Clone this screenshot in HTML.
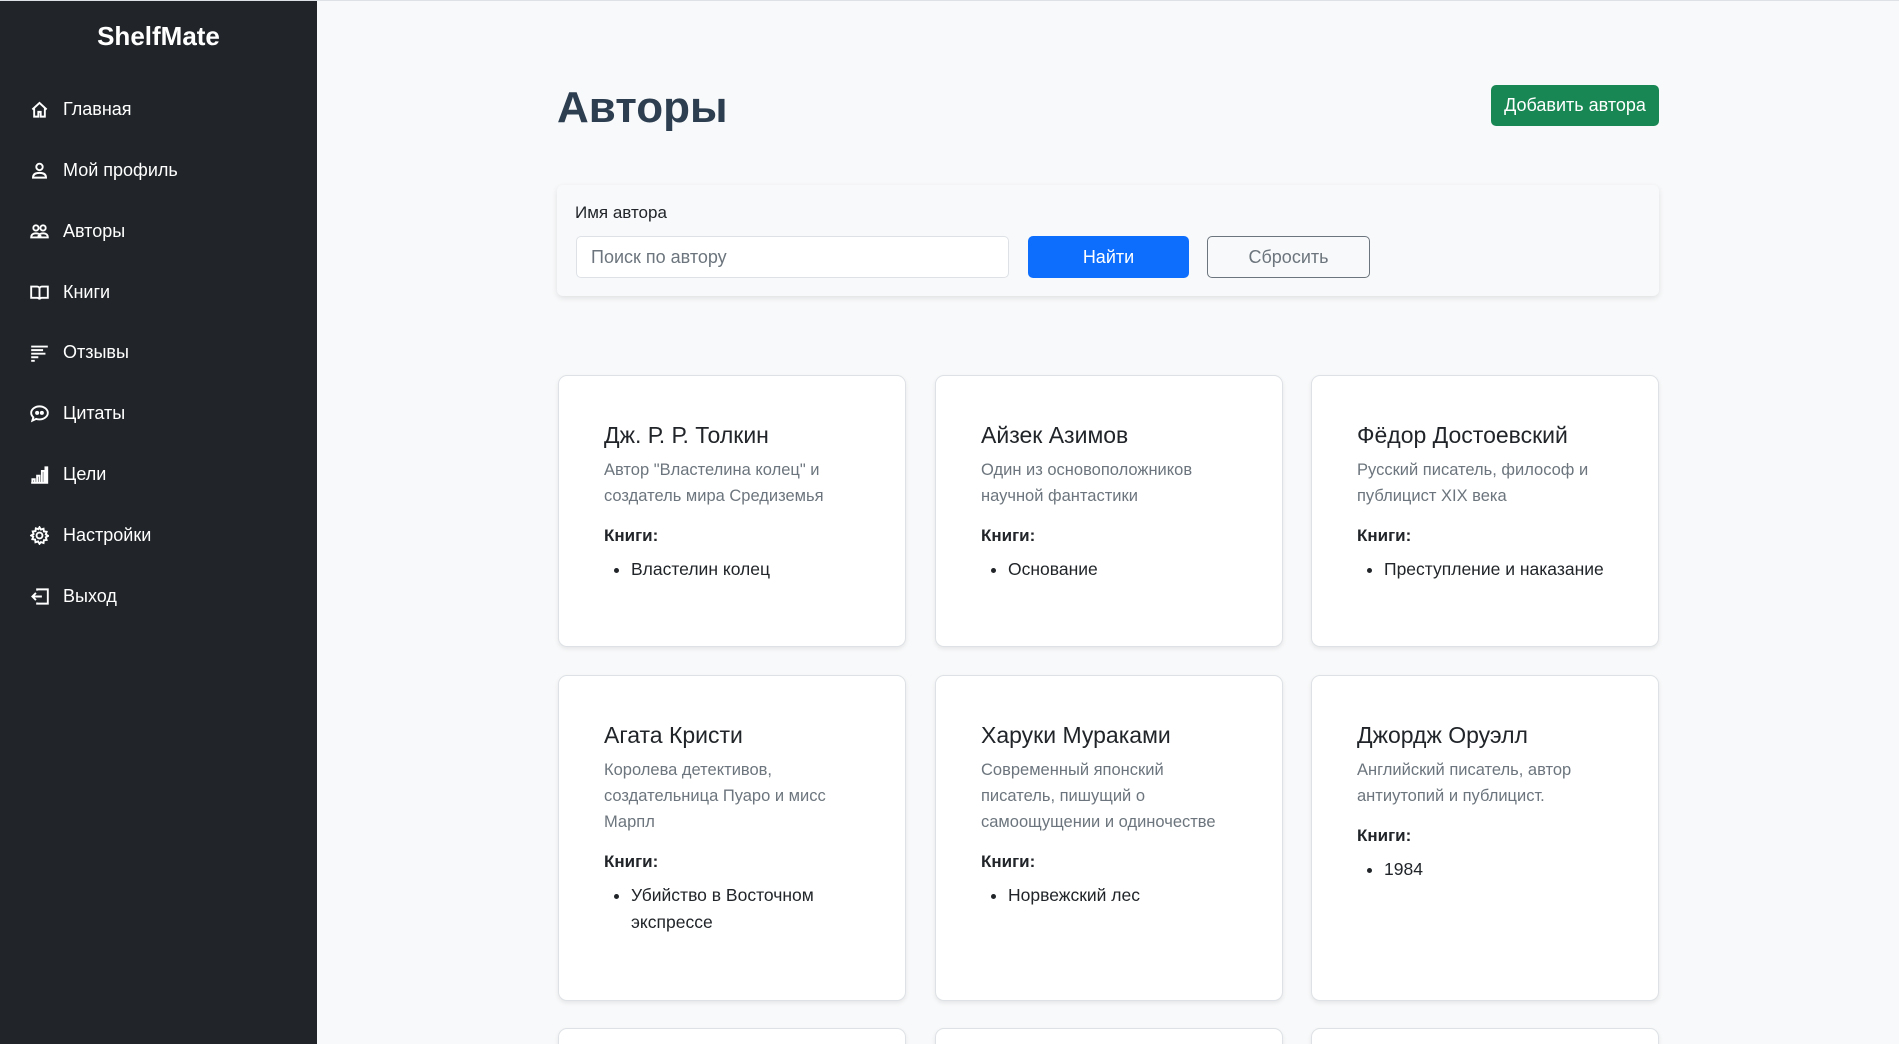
<!DOCTYPE html>
<html><head><meta charset="utf-8"><style>
*{box-sizing:border-box;margin:0;padding:0}
html,body{width:1899px;height:1044px;overflow:hidden}
body{background:#f8f9fa;font-family:"Liberation Sans","DejaVu Sans",sans-serif;position:relative}
#wrap{position:absolute;left:0;top:0;width:1899px;height:1044px;overflow:hidden;border-top:1px solid #dee2e6}
.sb{position:absolute;left:0;top:0;width:317px;height:1044px;background:#212529;color:#fff}
.logo{position:absolute;top:20px;width:317px;text-align:center;font-size:26px;font-weight:bold}
.nav{position:absolute;left:30px;display:flex;align-items:center;font-size:18px;height:24px}
.nav svg{width:19px;height:19px;margin-right:14px;stroke:#fff;fill:none;stroke-width:1.6}
h1{position:absolute;left:557px;top:82px;font-size:44px;color:#2c3e50;font-weight:bold}
.add{position:absolute;left:1491px;top:84px;width:168px;height:41px;background:#198754;color:#fff;border-radius:5px;font-size:18px;text-align:center;line-height:41px}
.search{position:absolute;left:557px;top:184px;width:1102px;height:111px;background:#f8f9fa;border-radius:6px;box-shadow:0 2px 6px rgba(0,0,0,.1)}
.lbl{position:absolute;left:18px;top:18px;font-size:17px;color:#212529}
.inp{position:absolute;left:19px;top:51px;width:433px;height:42px;background:#fff;border:1px solid #dee2e6;border-radius:5px;font-size:18px;color:#6c757d;padding-left:14px;line-height:40px}
.b1{position:absolute;left:471px;top:51px;width:161px;height:42px;background:#0d6efd;color:#fff;border-radius:5px;font-size:18px;text-align:center;line-height:42px}
.b2{position:absolute;left:650px;top:51px;width:163px;height:42px;border:1px solid #6c757d;color:#6c757d;border-radius:5px;font-size:18px;text-align:center;line-height:40px}
.card{position:absolute;width:348px;background:#fff;border:1px solid #dee2e6;border-radius:9px;box-shadow:0 2px 4px rgba(0,0,0,.08);padding:46px 58px 0 45px}
.card h3{font-size:23px;font-weight:normal;color:#212529;margin-bottom:8px;white-space:nowrap}
.card p{font-size:16.5px;line-height:26px;color:#6c757d}
.card h4{font-size:17px;font-weight:bold;color:#212529;margin-top:17px;margin-bottom:10px}
.card ul{padding-left:27px;font-size:17.5px;line-height:27px;color:#212529}
</style></head><body><div id="wrap">
<div class="sb">
<div class="logo">ShelfMate</div>
<div class="nav" style="top:96px"><svg viewBox="0 0 16 16"><path d="M2 8L8 2.5 14 8M3.5 7v7h3.5v-4h2v4h3.5V7"/></svg>Главная</div>
<div class="nav" style="top:157px"><svg viewBox="0 0 16 16"><circle cx="8" cy="5" r="2.7"/><path d="M2.5 14c0-3 2.5-4 5.5-4s5.5 1 5.5 4z"/></svg>Мой профиль</div>
<div class="nav" style="top:218px"><svg viewBox="0 0 16 16"><circle cx="5" cy="5" r="2.2"/><circle cx="11" cy="5" r="2.2"/><path d="M1 13c0-2.5 1.8-3.5 4-3.5s4 1 4 3.5zM7 13c0-2.5 1.8-3.5 4-3.5s4 1 4 3.5z"/></svg>Авторы</div>
<div class="nav" style="top:279px"><svg viewBox="0 0 16 16"><path d="M1 3h5c1 0 2 .7 2 2v9c0-1-1-1.5-2-1.5H1zM15 3h-5c-1 0-2 .7-2 2v9c0-1 1-1.5 2-1.5h5z"/></svg>Книги</div>
<div class="nav" style="top:339px"><svg viewBox="0 0 16 16"><path d="M1 3h14M1 6h10M1 9h12M1 12h6M1 15h3"/></svg>Отзывы</div>
<div class="nav" style="top:400px"><svg viewBox="0 0 16 16"><path d="M8 2c3.8 0 7 2.5 7 5.5S11.8 13 8 13c-1 0-2-.2-2.8-.5L2 14l.8-2.8C1.7 10.2 1 9 1 7.5 1 4.5 4.2 2 8 2z"/><circle cx="6" cy="7.5" r=".9" fill="#fff"/><circle cx="10" cy="7.5" r=".9" fill="#fff"/></svg>Цитаты</div>
<div class="nav" style="top:461px"><svg viewBox="0 0 16 16"><path d="M1 15h14M2 12h2v3H2zM6 9h2v6H6zM10 5h2v10h-2zM13 2h1.5v13H13z"/></svg>Цели</div>
<div class="nav" style="top:522px"><svg viewBox="0 0 16 16"><circle cx="8" cy="8" r="2.5"/><path d="M8 1l1.2 2 2.2-.7.3 2.3 2.3.3-.7 2.2 2 1.2-2 1.2.7 2.2-2.3.3-.3 2.3-2.2-.7L8 15l-1.2-2-2.2.7-.3-2.3-2.3-.3.7-2.2L1 8l2-1.2-.7-2.2 2.3-.3.3-2.3 2.2.7z"/></svg>Настройки</div>
<div class="nav" style="top:583px"><svg viewBox="0 0 16 16"><path d="M6 3V2h9v12H6v-1M10 8H2M5 5L2 8l3 3"/></svg>Выход</div>
</div>
<h1>Авторы</h1>
<div class="add">Добавить автора</div>
<div class="search"><div class="lbl">Имя автора</div><div class="inp">Поиск по автору</div><div class="b1">Найти</div><div class="b2">Сбросить</div></div>

<div class="card" style="left:558px;top:374px;height:272px"><h3>Дж. Р. Р. Толкин</h3><p>Автор "Властелина колец" и создатель мира Средиземья</p><h4>Книги:</h4><ul><li>Властелин колец</li></ul></div>
<div class="card" style="left:935px;top:374px;height:272px"><h3>Айзек Азимов</h3><p>Один из основоположников научной фантастики</p><h4>Книги:</h4><ul><li>Основание</li></ul></div>
<div class="card" style="left:1311px;top:374px;height:272px"><h3>Фёдор Достоевский</h3><p>Русский писатель, философ и публицист XIX века</p><h4>Книги:</h4><ul><li style="white-space:nowrap">Преступление и наказание</li></ul></div>
<div class="card" style="left:558px;top:674px;height:326px"><h3>Агата Кристи</h3><p>Королева детективов, создательница Пуаро и мисс Марпл</p><h4>Книги:</h4><ul><li>Убийство в Восточном экспрессе</li></ul></div>
<div class="card" style="left:935px;top:674px;height:326px"><h3>Харуки Мураками</h3><p>Современный японский<br>писатель, пишущий о<br>самоощущении и одиночестве</p><h4>Книги:</h4><ul><li>Норвежский лес</li></ul></div>
<div class="card" style="left:1311px;top:674px;height:326px"><h3>Джордж Оруэлл</h3><p>Английский писатель, автор антиутопий и публицист.</p><h4>Книги:</h4><ul><li>1984</li></ul></div>
<div class="card" style="left:558px;top:1027px;height:60px"></div>
<div class="card" style="left:935px;top:1027px;height:60px"></div>
<div class="card" style="left:1311px;top:1027px;height:60px"></div>
</div></body></html>
